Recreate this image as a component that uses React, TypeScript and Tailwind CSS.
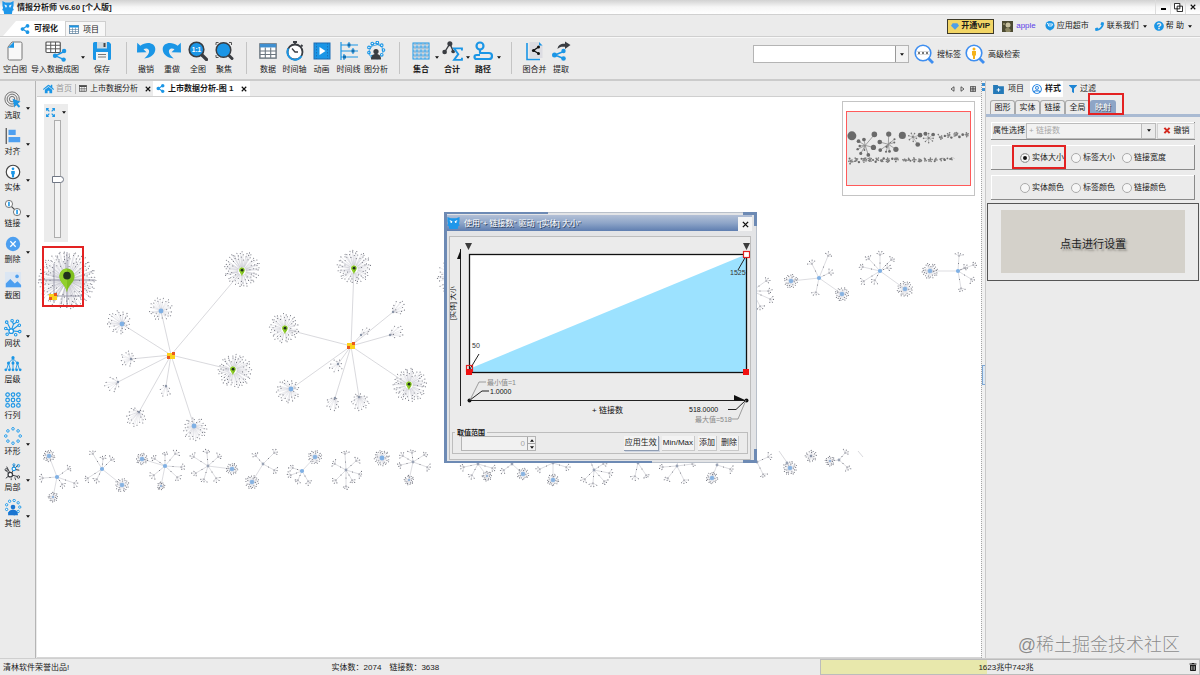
import React from 'react';
import { FaShareAlt, FaHome, FaPhoneAlt, FaFilter, FaQuestionCircle, FaRegUserCircle, FaTrashAlt } from 'react-icons/fa';

const BLUE = '#1b96e6';
const DARK = '#3a3d42';

/* ---------- graph data ---------- */

type Burst = { x: number; y: number; r: number; n: number; cx?: number; cy?: number; hub?: 'pin' | 'blue' | 'dot' };
type Star = { x: number; y: number; big?: boolean; bursts?: [number, number, number][]; fans?: [number, number][] };

const BURSTS: Burst[] = [
  { x: 67, y: 280, r: 29, n: 180 },
  { x: 242, y: 269, r: 18, n: 82, cy: 271, hub: 'pin' },
  { x: 354, y: 267, r: 17, n: 74, cy: 269, hub: 'pin' },
  { x: 460, y: 277, r: 23, n: 90, hub: 'pin' },
  { x: 235, y: 371, r: 17, n: 74, cx: 233, cy: 370, hub: 'pin' },
  { x: 284, y: 328, r: 15, n: 56, cx: 285, cy: 329, hub: 'pin' },
  { x: 410, y: 385, r: 17, n: 74, cx: 409, hub: 'pin' },
  { x: 161, y: 309, r: 12, n: 32, cy: 311, hub: 'blue' },
  { x: 119, y: 322, r: 12, n: 34, cx: 122, cy: 324, hub: 'blue' },
  { x: 128, y: 359, r: 8, n: 16, cx: 131, hub: 'dot' },
  { x: 112, y: 384, r: 8, n: 12, cx: 118, cy: 382, hub: 'dot' },
  { x: 136, y: 417, r: 10, n: 23, cx: 139, cy: 412, hub: 'dot' },
  { x: 165, y: 391, r: 6, n: 9, cx: 166, cy: 386, hub: 'dot' },
  { x: 195, y: 429, r: 12, n: 36, cx: 194, cy: 426, hub: 'blue' },
  { x: 399, y: 307, r: 7, n: 12, cx: 393, cy: 312, hub: 'dot' },
  { x: 397, y: 332, r: 7, n: 11, cx: 390, cy: 335, hub: 'dot' },
  { x: 366, y: 331, r: 4, n: 6, cx: 361, cy: 335, hub: 'dot' },
  { x: 360, y: 402, r: 9, n: 22, cx: 359, cy: 397, hub: 'dot' },
  { x: 333, y: 404, r: 7, n: 13, cx: 335, cy: 398, hub: 'dot' },
  { x: 336, y: 366, r: 7, n: 11, cx: 338, cy: 364, hub: 'dot' },
  { x: 288, y: 391, r: 12, n: 34, cx: 291, cy: 389, hub: 'blue' },
  { x: 382, y: 458, r: 8, n: 34, hub: 'blue' },
  { x: 811, y: 456, r: 6, n: 20, hub: 'dot' },
];

const LINKS: [number, number, number, number][] = [
  [171, 355, 242, 271], [171, 355, 161, 311], [171, 355, 122, 324], [171, 355, 131, 359], [171, 355, 118, 382],
  [171, 355, 139, 412], [171, 355, 166, 386], [171, 355, 194, 426], [171, 355, 233, 370],
  [351, 346, 354, 269], [351, 346, 285, 329], [351, 346, 393, 312], [351, 346, 390, 335], [351, 346, 361, 335],
  [351, 346, 409, 385], [351, 346, 359, 397], [351, 346, 335, 398], [351, 346, 338, 364], [351, 346, 291, 389],
  [779, 451, 786, 461], [786, 461, 790, 468], [858, 451, 863, 457],
];

const STARS: Star[] = [
  { x: 57, y: 477, big: true, bursts: [[49, 456, 6], [53, 497, 5]], fans: [[68, 469], [74, 483], [43, 478], [62, 484]] },
  { x: 102, y: 469, big: true, bursts: [[122, 485, 7]], fans: [[93, 454], [111, 460], [88, 478], [97, 479], [103, 459]] },
  { x: 165, y: 466, big: true, bursts: [[142, 459, 6], [161, 486, 4]], fans: [[175, 454], [181, 467], [177, 477], [154, 475], [165, 455], [155, 459]] },
  { x: 208, y: 466, bursts: [[232, 469, 6]], fans: [[207, 453], [194, 457], [218, 457], [196, 473], [204, 479], [216, 478]] },
  { x: 263, y: 464, bursts: [[252, 482, 7]], fans: [[274, 453], [256, 456], [274, 470]] },
  { x: 302, y: 471, big: true, bursts: [[315, 457, 7]], fans: [[291, 475], [293, 468], [308, 481], [298, 480]] },
  { x: 346, y: 470, fans: [[345, 454], [356, 461], [359, 474], [346, 486], [336, 480], [335, 464], [352, 480]] },
  { x: 413, y: 462, bursts: [[409, 480, 5]], fans: [[403, 456], [412, 453], [424, 455], [427, 467], [401, 465]] },
  { x: 478, y: 464, bursts: [[487, 476, 5]], fans: [[464, 467], [472, 475], [492, 468]] },
  { x: 512, y: 464, bursts: [[523, 474, 6]], fans: [[504, 470], [508, 455]] },
  { x: 553, y: 463, bursts: [[553, 480, 6]], fans: [[540, 469], [566, 467], [550, 452]] },
  { x: 594, y: 470, fans: [[590, 460], [604, 481], [593, 483], [585, 479], [609, 473], [603, 464]] },
  { x: 638, y: 463, fans: [[635, 476], [646, 475], [632, 455]] },
  { x: 677, y: 466, fans: [[663, 467], [668, 478], [684, 480], [692, 464], [679, 454]] },
  { x: 717, y: 465, bursts: [[712, 478, 6]], fans: [[730, 469], [722, 455]] },
  { x: 757, y: 462, fans: [[768, 457], [763, 474]] },
  { x: 787, y: 463, bursts: [[790, 468, 7]] },
  { x: 839, y: 460, bursts: [[830, 461, 5]], fans: [[845, 453], [847, 467]] },
  { x: 542, y: 290, big: true, bursts: [[598, 275, 14], [580, 348, 14]], fans: [[530, 260], [510, 280], [515, 310], [545, 325], [555, 262], [570, 300]] },
  { x: 665, y: 298, big: true, bursts: [[640, 265, 12], [700, 270, 11]], fans: [[625, 300], [640, 325], [665, 335], [695, 320], [665, 262], [700, 300]] },
  { x: 752, y: 291, fans: [[766, 281], [770, 299], [768, 291], [760, 306], [740, 270]] },
  { x: 819, y: 278, big: true, bursts: [[791, 281, 7], [842, 294, 7]], fans: [[812, 264], [828, 256], [829, 273], [816, 292]] },
  { x: 880, y: 271, big: true, bursts: [[905, 289, 8]], fans: [[869, 259], [880, 255], [891, 260], [863, 267], [864, 281], [875, 280], [887, 268]] },
  { x: 958, y: 271, big: true, bursts: [[930, 271, 8]], fans: [[959, 256], [973, 265], [971, 279], [961, 288], [964, 268]] },
];

const rnd = (seed: number) => {
  const v = Math.sin(seed * 12.9898) * 43758.5453;
  return v - Math.floor(v);
};

function burstPaths(b: Burst) {
  const cx = b.cx ?? b.x;
  const cy = b.cy ?? b.y;
  let spokes = '';
  let dots = '';
  for (let i = 0; i < b.n; i++) {
    const a = i * 2.39996 + rnd(b.x + i) * 0.2;
    const d = b.r * (0.4 + 0.6 * Math.sqrt((i + 0.5) / b.n));
    const px = (b.x + Math.cos(a) * d).toFixed(1);
    const py = (b.y + Math.sin(a) * d).toFixed(1);
    spokes += `M${cx} ${cy}L${px} ${py}`;
    dots += `M${px} ${py}h.01`;
  }
  return { lines: '', spokes, dots };
}

function fanPaths(hx: number, hy: number, fx: number, fy: number) {
  const a = Math.atan2(fy - hy, fx - hx);
  let lines = `M${hx} ${hy}L${fx} ${fy}`;
  let dots = `M${fx} ${fy}h.01M${(hx + fx) / 2} ${(hy + fy) / 2}h.01`;
  [-1.1, -0.3, 0.5, 1.2].forEach((o, i) => {
    const d = 2.5 + rnd(fx + fy + i) * 2;
    const px = (fx + Math.cos(a + o) * d).toFixed(1);
    const py = (fy + Math.sin(a + o) * d).toFixed(1);
    lines += `M${fx} ${fy}L${px} ${py}`;
    dots += `M${px} ${py}h.01`;
  });
  return { lines, spokes: '', dots };
}

function buildGraph() {
  let lines = '';
  let spokes = '';
  let dots = '';
  const add = (p: { lines: string; spokes: string; dots: string }) => {
    lines += p.lines;
    spokes += p.spokes;
    dots += p.dots;
  };
  BURSTS.forEach((b) => add(burstPaths(b)));
  STARS.forEach((s) => {
    s.bursts?.forEach(([x, y, r]) => {
      lines += `M${s.x} ${s.y}L${x} ${y}`;
      add(burstPaths({ x, y, r, n: Math.round(r * 4) }));
    });
    s.fans?.forEach(([x, y]) => add(fanPaths(s.x, s.y, x, y)));
  });
  return { lines, spokes, dots };
}

const GRAPH = buildGraph();
const LINK_PATH = LINKS.map(([a, b, c, d]) => `M${a} ${b}L${c} ${d}`).join('');

function Pin({ x, y, s }: { x: number; y: number; s: number }) {
  return (
    <g transform={`translate(${x} ${y}) scale(${s})`}>
      <path d="M0 15C-1 8-8 5-8-2a8 8 0 0 1 16 0C8 5 1 8 0 15Z" fill="#7fbf1f" />
      <path d="M0 15C-1 8-8 5-8-2a8 8 0 0 1 8-8Z" fill="#92d02c" />
      <circle cx="0" cy="-2.5" r="4" fill="#20301c" />
    </g>
  );
}

function Building({ x, y }: { x: number; y: number }) {
  return (
    <g>
      <path d={`M${x - 4} ${y - 3}h8v6h-8z`} fill="#fbd21c" />
      <path d={`M${x + 1} ${y - 4}h3v3h-3zM${x - 4} ${y}h3v3h-3z`} fill="#ea5a1c" />
    </g>
  );
}

function Graph() {
  return (
    <g>
      <path d={LINK_PATH} stroke="#c8c8ce" strokeWidth=".7" />
      <path d={GRAPH.spokes} stroke="#a9a9b8" strokeWidth=".2" />
      <path d={GRAPH.lines} stroke="#a9a9b4" strokeWidth=".4" />
      <path d={GRAPH.dots} stroke="#5a5d68" strokeWidth="1.1" strokeLinecap="round" opacity=".85" />
      <path d="M38 280H95M67 252V308M54 296H82M54 264V296" stroke="#8a8a9c" strokeWidth=".8" />
      {BURSTS.map((b, i) => {
        const cx = b.cx ?? b.x;
        const cy = b.cy ?? b.y;
        if (b.hub === 'pin')
          return (
            <g key={i}>
              <circle cx={cx} cy={cy} r="3.8" fill="#fff" />
              <Pin x={cx} y={cy} s={0.34} />
            </g>
          );
        if (b.hub === 'blue') return <circle key={i} cx={cx} cy={cy} r="2.4" fill="#7fb0e4" />;
        return b.hub ? <circle key={i} cx={cx} cy={cy} r="1.2" fill="#8a94a6" /> : null;
      })}
      {STARS.map((s, i) => (
        <g key={i}>
          <circle cx={s.x} cy={s.y} r={s.big ? 2.1 : 1.4} fill={s.big ? '#7fb0e4' : '#9aa3b5'} />
          {s.bursts?.map(([x, y, r]) => (
            <circle key={x} cx={x} cy={y} r={r > 5 ? 2.3 : 1} fill="#7fb0e4" opacity=".85" />
          ))}
        </g>
      ))}
      <Building x={171} y={356} />
      <Building x={351} y={346} />
      <Pin x={67} y={278} s={0.95} />
      <Building x={53} y={297} />
    </g>
  );
}

function MiniMap() {
  return (
    <div className="absolute right-[6px] top-1 border border-[#c4c4c4] bg-white px-[3px] pb-[9px] pt-[9px]">
      <svg viewBox="29 99 958 560" className="block h-[75px] w-[125px] border border-[#ff5a5a] bg-[#e9e9e9]" fill="none">
        <path d={LINK_PATH} stroke="#8a8a8a" strokeWidth="6" />
        {BURSTS.map((b, i) => (
          <circle key={i} cx={b.x} cy={b.y} r={b.r * 1.2} fill="#6a6a6a" />
        ))}
        {STARS.map((s, i) => (
          <g key={i}>
            <circle cx={s.x} cy={s.y} r="8" fill="#6a6a6a" />
            {s.bursts?.map(([x, y, r]) => (
              <g key={x}>
                <line x1={s.x} y1={s.y} x2={x} y2={y} stroke="#8a8a8a" strokeWidth="4" />
                <circle cx={x} cy={y} r={r * 1.3} fill="#6a6a6a" />
              </g>
            ))}
            {s.fans?.map(([x, y]) => (
              <g key={`${x}-${y}`}>
                <line x1={s.x} y1={s.y} x2={x} y2={y} stroke="#8a8a8a" strokeWidth="4" />
                <circle cx={x} cy={y} r="6" fill="#777" />
              </g>
            ))}
          </g>
        ))}
      </svg>
    </div>
  );
}

/* ---------- shared bits ---------- */

const Caret = ({ className = '' }: { className?: string }) => (
  <svg viewBox="0 0 6 4" className={`h-[3px] w-[4px] shrink-0 ${className}`}>
    <path d="M0 0h6L3 4z" fill="#111" />
  </svg>
);

const Svg = ({ children, className = 'h-5 w-5' }: { children: React.ReactNode; className?: string }) => (
  <svg viewBox="0 0 20 20" className={`shrink-0 ${className}`} fill="none">
    {children}
  </svg>
);

const Mascot = ({ className }: { className: string }) => (
  <svg viewBox="0 0 14 14" className={`shrink-0 ${className}`} preserveAspectRatio="none">
    <path d="M.5 0L4 1.500h6L13.500 0v5l-.7 2.500 1 2.300-1.600.8L11.500 14h-9l-.7-3.400L.2 9.800l1-2.300L.5 5z" fill="#1e97ea" />
    <path d="M3 4.200l2.600 1.300M11 4.200L8.400 5.500" stroke="#fff" strokeWidth="1.100" />
    <circle cx="4.600" cy="6" r=".9" fill="#fff" />
    <circle cx="9.400" cy="6" r=".9" fill="#fff" />
  </svg>
);

const TableIcon = ({ className = 'h-[9px] w-[10px]', head = BLUE, stroke = '#5c7f9c' }: { className?: string; head?: string; stroke?: string }) => (
  <svg viewBox="0 0 20 18" className={`shrink-0 ${className}`} preserveAspectRatio="none">
    <rect x="1" y="1" width="18" height="16" fill="#fff" stroke={stroke} strokeWidth="1.600" />
    <rect x="1" y="1" width="18" height="4" fill={head} />
    <path d="M1 9h18M1 13h18M7 5v12M13 5v12" stroke={stroke} strokeWidth="1.200" />
  </svg>
);

/* ---------- toolbar icons ---------- */

const ring = (cx: number, cy: number, r: number, n: number, s = 1.3, color = BLUE) =>
  Array.from({ length: n }, (_, i) => {
    const a = (i / n) * Math.PI * 2;
    return <circle key={i} cx={cx + Math.cos(a) * r} cy={cy + Math.sin(a) * r} r={s} stroke={color} strokeWidth="1.100" fill="#fff" />;
  });

const iconBlank = (
  <Svg>
    <path d="M7 1h8.500a1.500 1.500 0 0 1 1.500 1.500v15a1.500 1.500 0 0 1-1.500 1.500h-11A1.500 1.500 0 0 1 3 17.500V6z" fill="#f8f8f8" stroke="#777" />
    <path d="M9 .8v6H3z" fill={BLUE} />
  </Svg>
);
const iconImport = (
  <svg viewBox="0 0 24 22" className="h-[21px] w-[23px]" fill="none">
    <rect x="2" y="1" width="15" height="11" rx="1" fill="#fff" stroke="#555" strokeWidth="1.200" />
    <path d="M2 4.500h15M2 8.200h15M7 1v11M12 1v11" stroke="#555" />
    <path d="M21 11l-9 4.500 9 4" stroke={BLUE} strokeWidth="1.500" />
    <circle cx="21" cy="10.500" r="2.300" fill={BLUE} />
    <circle cx="11.500" cy="15.500" r="2.300" fill={BLUE} />
    <circle cx="20.500" cy="19.500" r="2.300" fill={BLUE} />
  </svg>
);
const iconSave = (
  <Svg>
    <path d="M1 2.500A1.500 1.500 0 0 1 2.500 1H17l2 2v14.500a1.500 1.500 0 0 1-1.500 1.500h-15A1.500 1.500 0 0 1 1 17.500z" fill={BLUE} />
    <path d="M5 1h10v6.500H5z" fill="#cfd8de" />
    <path d="M11.500 2h2v4h-2z" fill="#444" />
    <path d="M4 11h12v8H4z" fill="#f4f4f4" />
    <path d="M6 13.500h8M6 16h8" stroke="#777" />
  </Svg>
);
const undoPath = 'M1.200 1.800L1 11.500l9.500-.2-3-3c2-1.400 4.700-1 5.400 1 .8 2.400-.8 5.200-4.600 8.200 7-.8 11-4.500 11-9.500 0-6-8.500-8.200-15-3.200z';
const iconUndo = <Svg><path d={undoPath} fill={BLUE} /></Svg>;
const iconRedo = <Svg><g transform="matrix(-1 0 0 1 20 0)"><path d={undoPath} fill={BLUE} /></g></Svg>;
const iconFull = (
  <Svg>
    <path d="M14 14l4.500 4.500" stroke={DARK} strokeWidth="3.200" strokeLinecap="round" />
    <circle cx="8.500" cy="8.500" r="7.300" fill={BLUE} stroke={DARK} strokeWidth="1.600" />
    <text x="8.500" y="10.800" fontSize="6.500" fontWeight="700" fill="#fff" textAnchor="middle">1:1</text>
  </Svg>
);
const iconFocus = (
  <Svg>
    <path d="M2 4V1.500h2.500M15 1.500h2.500V4M2 14v2.500h2.500" stroke="#555" />
    <path d="M14.500 14l3.500 3.500" stroke={DARK} strokeWidth="3" strokeLinecap="round" />
    <circle cx="9.500" cy="9" r="7.300" fill={BLUE} stroke={DARK} strokeWidth="1.500" />
  </Svg>
);
const iconTimer = (
  <Svg>
    <path d="M8 1h4M10 1v2M16 4l1.500 1.500" stroke={DARK} strokeWidth="1.800" />
    <circle cx="10" cy="11" r="7.500" fill="#fff" stroke={DARK} strokeWidth="1.800" />
    <path d="M3.500 7.500a7.500 7.500 0 0 0 13 7.500" stroke={BLUE} strokeWidth="2" />
    <path d="M7 7.500l3 3.500h3" stroke={DARK} strokeWidth="1.300" />
  </Svg>
);
const iconPlay = (
  <Svg>
    <rect x="2" y="2" width="16" height="16" fill={BLUE} stroke="#1f6fb5" />
    <path d="M4.500 2v16M15.500 2v16" stroke="#1f6fb5" strokeDasharray="1.500 1.500" />
    <path d="M7.500 6v8l6-4z" fill="#fff" />
  </Svg>
);
const iconTimeline = (
  <Svg>
    <path d="M2 1v18M2 4h17M2 10h17M2 16h17M10 1v6M14 7v6M5 13v6" stroke={BLUE} strokeWidth="1.200" />
    <path d="M8.500 4h3M12.500 10h3M4 16h3" stroke="#146fb0" strokeWidth="3" />
  </Svg>
);
const iconAnalyze = (
  <Svg>
    {ring(10, 9, 7.500, 9, 1.300)}
    <path d="M4 6l5-4 7 4 1 6M3 10l3-5 8-2M3 10l1 5" stroke={BLUE} strokeWidth=".8" />
    <circle cx="10" cy="10.500" r="2.600" fill={DARK} />
    <path d="M5 18.500c0-4 2-5.500 5-5.500s5 1.500 5 5.500z" fill={DARK} />
  </Svg>
);
const iconSet = (
  <Svg>
    <rect x="2" y="2" width="16" height="16" stroke={BLUE} />
    <path d="M6 2v16M10 2v16M14 2v16M2 6h16M2 10h16M2 14h16" stroke={BLUE} strokeWidth=".8" />
    <path d="M4 2.500v15M8 2.500v15M12 2.500v15M16 2.500v15" stroke="#5a7fa0" strokeDasharray="2 2" strokeWidth=".8" />
  </Svg>
);
const iconSum = (
  <Svg className="h-[21px] w-[21px]">
    <path d="M2.500 10.500l5-8 4 9" stroke={DARK} strokeWidth="1.300" />
    <circle cx="2.500" cy="10.500" r="2.200" fill={DARK} />
    <circle cx="7.500" cy="2.700" r="2.400" fill={DARK} />
    <circle cx="10.500" cy="10" r="1.700" fill={DARK} />
    <path d="M19 9V7h-7.500l4 5.500-4 5.500H19v-2" stroke={BLUE} strokeWidth="1.800" />
  </Svg>
);
const iconPath = (
  <Svg>
    <circle cx="7" cy="5" r="3.500" stroke={BLUE} strokeWidth="2.200" />
    <path d="M7 8.500V12h9a3 3 0 0 1 0 6H3.500a2 2 0 0 1 0-4H7" stroke={BLUE} strokeWidth="2.200" strokeLinejoin="round" />
  </Svg>
);
const iconMerge = (
  <Svg>
    <path d="M4.500 1H14l3.500 3.500V17h-13z" fill="#dcdce2" />
    <path d="M14 1v3.500h3.500z" fill={BLUE} />
    <path d="M2 2v16.500h13" stroke={BLUE} strokeWidth="1.600" />
    <path d="M13.500 6L8.500 9.500l5 3" stroke="#111" strokeWidth="1.200" />
    <circle cx="13.500" cy="6" r="1.500" fill="#111" />
    <circle cx="8.500" cy="9.500" r="1.600" fill="#111" />
    <circle cx="13.500" cy="12.500" r="1.500" fill="#111" />
  </Svg>
);
const iconExtract = (
  <Svg>
    <path d="M6.500 8C7 4 10 2.500 14 2.800V.5L19.500 4 14 8V5.800c-3.500-.3-5.500.2-7.500 2.200z" fill={DARK} />
    <path d="M12.500 10.500L4 14l8.500 3.500" stroke={BLUE} strokeWidth="1.600" />
    <circle cx="12.500" cy="10" r="2.200" fill={BLUE} />
    <circle cx="3.500" cy="14" r="2.500" fill={BLUE} />
    <circle cx="12.500" cy="17.500" r="2.300" fill={BLUE} />
  </Svg>
);

function Tool({ icon, label, w = 'w-[26px]', bold = false, menu = false }: { icon: React.ReactNode; label: string; w?: string; bold?: boolean; menu?: boolean }) {
  return (
    <>
      <button className={`flex shrink-0 flex-col items-center gap-[3px] ${w}`}>
        <span className="flex h-[22px] items-center">{icon}</span>
        <span className={`whitespace-nowrap leading-[10px] ${bold ? 'font-bold' : ''}`}>{label}</span>
      </button>
      {menu && <span className="flex w-[5px] shrink-0 justify-center self-center"><Caret /></span>}
    </>
  );
}

const Divider = ({ w = 'w-[18px]' }: { w?: string }) => (
  <span className={`flex shrink-0 justify-center ${w}`}>
    <span className="h-8 w-px bg-[#c4c4c4]" />
  </span>
);

/* ---------- side tools ---------- */

const B = '#4d9ff0';
const sideTop: [string, React.ReactNode, boolean][] = [
  ['选取', <Svg className="h-[18px] w-[18px]"><circle cx="9" cy="9" r="8" stroke="#666" /><circle cx="9" cy="9" r="5.500" stroke="#666" /><circle cx="9" cy="9" r="3" stroke="#666" /><path d="M9.500 8.500l9 3.500-3.500 1.500 3 3.500-1.500 1.500-3.300-3.300-1.500 3.300z" fill={BLUE} /></Svg>, true],
  ['对齐', <Svg className="h-[18px] w-[18px]"><path d="M2.500 1v18" stroke="#555" strokeWidth="1.400" /><path d="M5 3h8v6H5zM5 11h13v6H5z" fill={B} /></Svg>, true],
  ['实体', <Svg className="h-[18px] w-[18px]"><circle cx="10" cy="10" r="7.500" fill="#fff" stroke="#444" strokeWidth="1.300" /><circle cx="10" cy="6.500" r="1.500" fill={BLUE} /><path d="M8 9h4v3.500h-.8V16H8.800v-3.500H8z" fill={BLUE} /></Svg>, true],
  ['链接', <Svg className="h-[18px] w-[18px]"><path d="M7 7l6 6" stroke="#444" strokeWidth="1.200" /><circle cx="5.500" cy="5.500" r="4" fill="#fff" stroke="#666" /><circle cx="14.500" cy="14.500" r="4" fill="#fff" stroke="#666" /><path d="M5.500 3v5M14.500 12v5" stroke={BLUE} strokeWidth="1.800" /></Svg>, true],
  ['删除', <Svg className="h-[18px] w-[18px]"><circle cx="10" cy="10" r="8" fill={B} /><path d="M7 7l6 6M13 7l-6 6" stroke="#fff" strokeWidth="1.400" /></Svg>, true],
  ['截图', <Svg className="h-[18px] w-[18px]"><rect x="1" y="1" width="18" height="18" fill="#dbe6f3" /><path d="M2 18v-4l5-5 5 5 3-2.500 4 4V18z" fill={B} /><circle cx="14.500" cy="6" r="2" fill={B} /></Svg>, false],
];
const sideBottom: [string, React.ReactNode, boolean][] = [
  ['网状', <Svg className="h-[18px] w-[18px]"><path d="M8 13L3.500 4M8 13l2.500-7M10.500 6L9 2M10.500 6l4-3M8 13l8-6M8 13L2 11M8 13l9 1" stroke={BLUE} strokeWidth="1.200" /><circle cx="8" cy="13.500" r="2.500" fill="#fff" stroke={BLUE} strokeWidth="1.400" />{[[3, 3.500], [9, 2], [15, 2.500], [17, 7], [2, 10.500], [17.500, 14], [13, 17.500], [3.500, 17]].map(([x, y]) => <circle key={`${x}-${y}`} cx={x} cy={y} r="1.400" stroke={BLUE} strokeWidth="1.200" fill="#fff" />)}</Svg>, true],
  ['层级', <Svg className="h-[18px] w-[18px]"><path d="M10 3v5M10 4L5 9M10 4l5 5M5 9l-2 7M5 9l2 7M15 9l-2 7M15 9l2 7M10 9v7" stroke={BLUE} /><circle cx="10" cy="3" r="1.800" fill={BLUE} />{[5, 10, 15].map((x) => <circle key={x} cx={x} cy="9" r="1.700" fill={BLUE} />)}{[2, 6, 10, 14, 18].map((x) => <circle key={x} cx={x} cy="16.500" r="1.500" fill={BLUE} />)}</Svg>, false],
  ['行列', <Svg className="h-[18px] w-[18px]">{[4, 10, 16].map((x) => [4, 10, 16].map((y) => <circle key={`${x}${y}`} cx={x} cy={y} r="2" stroke={BLUE} strokeWidth="1.300" />))}</Svg>, false],
  ['环形', <Svg className="h-[18px] w-[18px]">{ring(10, 10, 8, 8, 1.400)}</Svg>, true],
  ['局部', <Svg className="h-[18px] w-[18px]"><path d="M7 13L2 8M7 13l-5 4M7 13l8 2M11 7l5-5M11 7V2M11 7l6 1M8 12l3-5M3 4l4 8" stroke={DARK} strokeWidth="1.100" /><circle cx="7" cy="13" r="2.500" fill="#fff" stroke={DARK} strokeWidth="1.400" /><circle cx="2.500" cy="7.500" r="1.300" stroke={DARK} /><circle cx="16" cy="15.500" r="1.400" stroke={DARK} /><circle cx="11" cy="6.500" r="2" fill="#fff" stroke={BLUE} strokeWidth="1.300" /><circle cx="16" cy="3" r="1.400" stroke={BLUE} /><circle cx="11" cy="2" r="1.200" stroke={BLUE} /><path d="M8 17v2M12 16l1 3" stroke={DARK} /></Svg>, true],
  ['其他', <Svg className="h-[18px] w-[18px]">{ring(10, 9, 7.500, 9, 1.300)}<circle cx="10" cy="9" r="2.600" fill="#1a75d1" /><path d="M4.500 18c0-4 2-6 5.500-6s5.500 2 5.500 6z" fill="#1a75d1" /></Svg>, true],
];

function SideItem({ label, icon, menu }: { label: string; icon: React.ReactNode; menu: boolean }) {
  return (
    <button className="flex h-9 items-start">
      <span className="flex w-[25px] flex-col items-center">
        {icon}
        <span className="leading-[13px]">{label}</span>
      </span>
      {menu && <Caret className="mt-4 ml-px" />}
    </button>
  );
}

/* ---------- dialog ---------- */

function MappingDialog() {
  return (
    <section className="absolute left-[407px] top-[115px] w-[313px] bg-[#e3e4e6] p-[3px] outline outline-1 -outline-offset-1 outline-[#b9c0ca]" aria-label="映射设置">
      <span className="absolute left-0 top-0 h-full w-[3px] bg-[#6d8ab4]" />
      <span className="absolute left-0 top-0 h-[2px] w-[104px] bg-[#6d8ab4]" />
      <span className="absolute bottom-0 left-0 h-[2px] w-[208px] bg-[#6d8ab4]" />
      <span className="absolute right-0 top-0 h-[14px] w-[14px] border-r-[3px] border-t-[3px] border-[#6d8ab4]" />
      <span className="absolute bottom-0 right-0 h-[14px] w-[14px] border-b-[3px] border-r-[3px] border-[#6d8ab4]" />
      <header className="relative mr-[2px] flex h-[16px] items-center gap-[4px] bg-linear-to-b from-[#b3c0d6] via-[#8ea5c8] to-[#5f7eb0]">
        <Mascot className="h-[12px] w-[13px]" />
        <h2 className="flex-1 pt-px text-[8px] text-white [text-shadow:1px_1px_0_#2c3c58]">使用“+ 链接数” 驱动 “[实体] 大小”</h2>
        <button aria-label="关闭" className="mt-[2px] flex h-[14px] w-[14px] items-center justify-center bg-[#f5f5f5]">
          <svg viewBox="0 0 8 8" className="h-[7px] w-[7px]"><path d="M1 1l6 6M7 1L1 7" stroke="#111" strokeWidth="1.600" /></svg>
        </button>
      </header>
      <div className="relative ml-[2px] mr-[3px] mt-[5px] border border-[#bdbdbd] bg-[#ebebeb] pb-[5px]">
        <svg viewBox="450 237 300 192" className="block h-[192px] w-full font-[inherit]" fontSize="7">
          <rect x="469" y="254" width="278" height="118" fill="#fff" />
          <path d="M469 369L747 254V372H469z" fill="#9ce2ff" />
          <rect x="469.500" y="254.500" width="277" height="118" fill="none" stroke="#111" strokeWidth="1.300" />
          <path d="M465 243h7l-3.500 7zM743 243h7l-3.500 7z" fill="#3c3c3c" />
          <path d="M460.500 249v157" stroke="#222" />
          <path d="M461 249v10h-4z" fill="#111" />
          <path d="M469 400.500h278" stroke="#222" />
          <path d="M734 395l12 5.500h-12z" fill="#111" />
          <circle cx="469.500" cy="400.500" r="2" fill="#111" />
          <circle cx="746.500" cy="400.500" r="2" fill="#111" />
          <path d="M470 369l9-15M746 256l-8 14M470 400l12-9h7M746 400l-10 9.500h-8" stroke="#222" fill="none" />
          <path d="M470 400l9-18h7M746 400l-8 19h-7" stroke="#888" fill="none" strokeWidth=".8" />
          <rect x="466.500" y="365.500" width="6" height="6" fill="none" stroke="#e02020" strokeWidth="1.200" />
          <rect x="743.500" y="251.500" width="6" height="6" fill="#fff" stroke="#e02020" strokeWidth="1.200" />
          <rect x="466" y="369" width="6" height="6" fill="#f01010" />
          <rect x="743" y="369" width="6" height="6" fill="#f01010" />
          <text x="472" y="348" fill="#333">50</text>
          <text x="730" y="275" fill="#333">1525</text>
          <text x="487" y="385" fill="#888">最小值=1</text>
          <text x="490" y="394" fill="#111">1.0000</text>
          <text x="592" y="413" fontSize="8" fill="#111">+ 链接数</text>
          <text x="689" y="412" fill="#111">518.0000</text>
          <text x="695" y="422" fill="#888">最大值=518</text>
          <text transform="translate(455 320) rotate(-90)" fill="#111">[实体] 大小</text>
        </svg>
        <fieldset className="mx-[2px] flex items-center border border-[#bdbdbd] px-[8px] pb-[2px]">
          <legend className="ml-[-6px] px-[2px] text-[7px] font-bold leading-[7px]">取值范围</legend>
          <div className="flex h-[15px] w-[75px] border border-[#b5b5b5] bg-[#f1f1f1]">
            <input aria-label="取值范围" defaultValue="0" className="w-0 flex-1 pr-[2px] text-right text-[8px] text-[#a5a5a5] outline-none" />
            <div className="flex w-[8px] flex-col border-l border-[#a5a5a5]">
              <button aria-label="增加" className="flex flex-1 items-center justify-center border-b border-[#a5a5a5]"><Caret className="rotate-180" /></button>
              <button aria-label="减少" className="flex flex-1 items-center justify-center"><Caret /></button>
            </div>
          </div>
          <div className="ml-auto flex gap-[3px]">
            {['应用生效', 'Min/Max', '添加', '删除'].map((t, i) => (
              <button key={t} className={`h-[15px] whitespace-nowrap border-b border-r bg-[#f3f3f3] px-px text-[8px] ${i === 0 ? 'border-[#8f9db3] shadow-[1px_1px_0_#cfd6e2]' : 'border-[#c9c9c9]'}`}>{t}</button>
            ))}
          </div>
        </fieldset>
      </div>
    </section>
  );
}

/* ---------- right panel ---------- */

function RadioRow({ items, checked }: { items: string[]; checked?: number }) {
  return (
    <div className="relative flex h-[25px] items-center gap-[7px] border-b border-r border-[#8a8a8a] bg-[#ebebeb] pl-[29px] pt-px shadow-[inset_1px_1px_0_#fff]">
      {items.map((t, i) => (
        <label key={t} className="flex items-center gap-[2px] whitespace-nowrap">
          <input
            type="radio"
            name="mapping"
            defaultChecked={checked === i}
            className="m-0 h-[10px] w-[10px] appearance-none rounded-full border border-[#aaa] bg-[#f6f6f6] checked:bg-[#111] checked:shadow-[inset_0_0_0_2px_#f6f6f6]"
          />
          {t}
        </label>
      ))}
      {checked !== undefined && <span className="pointer-events-none absolute left-[21px] top-0 h-6 w-[54px] border-2 border-[#e32222]" />}
    </div>
  );
}

function RightPanel() {
  return (
    <aside className="relative flex w-[215px] shrink-0 flex-col border-l border-[#c9c9c9] bg-[#ebebeb]">
      <nav className="flex h-[16px] items-stretch pl-[4px]">
        <button className="flex w-10 items-center gap-[4px] pl-[3px]">
          <svg viewBox="0 0 12 10" className="h-[9px] w-[11px]"><path d="M0 0h5l1 1.500h6V10H0z" fill="#2479b8" /><path d="M6 3.500v4M4 5.500h4" stroke="#fff" /></svg>
          项目
        </button>
        <button className="flex items-center gap-[3px] bg-white px-[2px] font-bold">
          <FaRegUserCircle className="h-[10px] w-[10px] text-[#1c7fe0]" />
          样式
        </button>
        <button className="flex items-center gap-[3px] px-[6px]">
          <FaFilter className="h-[8px] w-[8px] text-[#1f85d4]" />
          过滤
        </button>
      </nav>
      <nav className="relative mt-[3px] flex h-[17px] border-b-[3px] border-[#a9bad2] pl-[4px]">
        {['图形', '实体', '链接', '全局'].map((t) => (
          <button key={t} className="w-[25px] rounded-t-[3px] border border-b-0 border-[#aaa] bg-[#ebebeb] pt-px">{t}</button>
        ))}
        <button className="w-[26px] rounded-t-[3px] bg-[#8ea5c6] pt-px text-white [text-shadow:1px_1px_0_#4a4f5c]">映射</button>
        <span className="pointer-events-none absolute left-[102px] top-[-7px] h-[22px] w-9 border-2 border-[#e32222]" />
      </nav>
      <div className="mt-[5px] flex flex-col gap-[5px] pl-[5px] pr-[5px]">
        <div className="flex h-[18px] items-center border-b border-r border-[#8a8a8a] shadow-[inset_1px_1px_0_#fff]">
          <label htmlFor="attr" className="w-[35px] whitespace-nowrap pl-[2px]">属性选择</label>
          <div className="relative flex h-[16px] flex-1 items-center border border-[#bbb] bg-[#f2f2f2]">
            <select id="attr" className="h-full w-full appearance-none pl-[2px] text-[8px] text-[#a8a8a8] outline-none">
              <option>+ 链接数</option>
            </select>
            <span className="pointer-events-none absolute right-0 top-0 flex h-full w-[14px] items-center justify-center border-l border-[#bbb] bg-[#ebebeb]"><Caret /></span>
          </div>
          <button className="ml-[2px] flex h-[14px] w-[36px] items-center justify-center gap-[3px] bg-[#f1f1f1] shadow-[0_0_0_1px_#d2d2d2]">
            <svg viewBox="0 0 8 8" className="h-[7px] w-[8px]"><path d="M1 1l6 6M7 1L1 7" stroke="#d42a20" strokeWidth="2.400" /></svg>
            撤销
          </button>
        </div>
        <RadioRow items={['实体大小', '标签大小', '链接宽度']} checked={0} />
        <RadioRow items={['实体颜色', '标签颜色', '链接颜色']} />
      </div>
      <div className="ml-px mr-px mt-[3px] border border-[#555] px-[13px] pb-[7px] pt-[6px]">
        <button className="h-[63px] w-full bg-[#d4d1ca] pt-[4px] text-[11px] text-[#222] [text-shadow:2px_2px_2px_#8a8780]">点击进行设置</button>
      </div>
      <p className="mt-auto pb-[2px] pr-5 text-right text-[18px] font-light leading-[22px] text-[#8b8b8b] [text-shadow:0_0_1px_#fff]">@稀土掘金技术社区</p>
    </aside>
  );
}

/* ---------- page ---------- */

const Close = () => (
  <svg viewBox="0 0 8 8" className="h-[6px] w-[6px] shrink-0"><path d="M1 1l6 6M7 1L1 7" stroke="#111" strokeWidth="1.500" /></svg>
);

export default function App() {
  return (
    <div className="flex h-screen flex-col overflow-hidden bg-[#ebebeb] text-[8px] leading-[10px] text-[#1a1a1a] [font-family:'Liberation_Sans','Noto_Sans_CJK_SC',sans-serif]">
      <header className="flex h-[15px] shrink-0 items-center border-b border-[#d0d0d0] bg-linear-to-b from-[#d2d2d2] via-[#f6f6f6] to-white pl-[2px]">
        <Mascot className="h-[13px] w-[12px]" />
        <h1 className="ml-[3px] pt-px font-bold">情报分析师 V6.60 [个人版]</h1>
        <div className="ml-auto flex h-full items-center">
          <button aria-label="最小化" className="flex h-full w-[15px] items-end justify-center border-l border-[#ddd] pb-[4px]"><span className="h-[2px] w-[5px] bg-black" /></button>
          <button aria-label="还原" className="flex h-full w-[15px] items-center justify-center border-l border-[#ddd]">
            <svg viewBox="0 0 10 10" className="h-[9px] w-[9px]" fill="#fff" stroke="#111"><path d="M.5.5h6v6h-6zM3.500 3.500h6v6h-6z" /></svg>
          </button>
          <button aria-label="关闭" className="flex h-full w-[15px] items-center justify-center border-l border-[#ddd]"><Close /></button>
        </div>
      </header>

      <div className="flex h-[22px] shrink-0 items-center border-b border-[#cfcfcf]">
        <nav className="flex h-[15px] self-end">
          <button className="relative flex w-[65px] items-center gap-[4px] bg-white pl-5 pt-px font-bold [clip-path:polygon(16px_0,100%_0,100%_100%,3px_100%)]">
            <FaShareAlt className="h-[10px] w-[10px] text-[#1b96e6]" />可视化
          </button>
          <button className="flex w-[41px] items-center gap-[4px] border border-b-0 border-[#cfcfcf] bg-[#f7f7f7] pl-[3px] pt-px">
            <TableIcon />项目
          </button>
        </nav>
        <div className="ml-auto flex items-center pr-[8px] pt-px">
          <button className="flex h-[15px] w-[47px] items-center justify-center gap-[2px] border border-[#3d3928] bg-[#f2d565] font-bold">
            <svg viewBox="0 0 10 8" className="h-[7px] w-[8px]"><path d="M2 0h6l2 3-5 5-5-5z" fill="#4f9fe8" /></svg>
            <span className="whitespace-nowrap">开通VIP</span>
          </button>
          <svg viewBox="0 0 11 11" className="ml-[8px] h-[11px] w-[11px]"><path d="M0 0h11v11H0z" fill="#4c4a32" /><circle cx="6" cy="4" r="2.500" fill="#c9c2a0" /><path d="M3 8l3-2 3 3-1 2H4zM1 2h2v2H1z" fill="#8b8662" /></svg>
          <a href="#apple" className="ml-[3px] text-[#5a3fe8]">apple</a>
          <button className="ml-[9px] flex items-center gap-[2px] whitespace-nowrap">
            <svg viewBox="0 0 10 10" className="h-[10px] w-[10px]"><circle cx="5" cy="4.500" r="4.500" fill={BLUE} /><path d="M2 2.500h1l.6 2.500h3.200l.7-2H3.500" stroke="#fff" strokeWidth=".9" fill="none" /><path d="M4 8.500h2L5 10z" fill={BLUE} /></svg>
            应用超市
          </button>
          <button className="ml-[6px] flex items-center gap-[3px] whitespace-nowrap">
            <FaPhoneAlt className="h-[9px] w-[9px] -scale-x-100 text-[#1b96e6]" />联系我们<Caret className="ml-px" />
          </button>
          <button className="ml-[7px] flex items-center gap-[2px] whitespace-nowrap">
            <FaQuestionCircle className="h-[10px] w-[10px] text-[#1b96e6]" />帮 助<Caret className="ml-[2px]" />
          </button>
        </div>
      </div>

      <div className="flex h-[44px] shrink-0 items-center border-b-2 border-[#cbcbcb] pb-px shadow-[inset_0_1px_0_#f8f8f8]">
        <Tool icon={iconBlank} label="空白图" w="w-[30px]" />
        <Tool icon={iconImport} label="导入数据成图" w="w-[50px]" menu />
        <Tool icon={iconSave} label="保存" w="w-[34px]" />
        <Divider w="w-[14px]" />
        <Tool icon={iconUndo} label="撤销" />
        <Tool icon={iconRedo} label="重做" />
        <Tool icon={iconFull} label="全图" />
        <Tool icon={iconFocus} label="聚焦" />
        <Divider />
        <Tool icon={<TableIcon className="h-4 w-[18px]" stroke="#6d7780" head="#3f8fd0" />} label="数据" />
        <Tool icon={iconTimer} label="时间轴" w="w-[27px]" />
        <Tool icon={iconPlay} label="动画" w="w-[27px]" />
        <Tool icon={iconTimeline} label="时间线" w="w-[27px]" />
        <Tool icon={iconAnalyze} label="图分析" w="w-[28px]" />
        <Divider />
        <Tool icon={iconSet} label="集合" bold menu />
        <Tool icon={iconSum} label="合计" bold menu />
        <Tool icon={iconPath} label="路径" bold menu />
        <Divider w="w-[20px]" />
        <Tool icon={iconMerge} label="图合并" w="w-[27px]" />
        <Tool icon={iconExtract} label="提取" />
        <div className="ml-auto mr-[180px] flex items-center self-start pt-[7px]">
          <div className="flex h-[18px] w-[156px] border border-[#b4b4b4] bg-white">
            <input aria-label="搜索" className="w-0 flex-1 px-1 outline-none" />
            <button aria-label="展开" className="flex w-[13px] items-center justify-center border-l border-[#999] bg-[#f3f3f3]"><Caret /></button>
          </div>
          <button className="ml-[5px] flex items-center gap-[3px] whitespace-nowrap">
            <Svg><path d="M14 14l5 5" stroke="#3e8ef0" strokeWidth="2.800" /><circle cx="9" cy="9" r="7.800" fill="#fff" stroke="#3e8ef0" strokeWidth="1.600" /><path d="M4 7.500l2 3m0-3l-2 3M8 7.500l2 3m0-3l-2 3M12 7.500l2 3m0-3l-2 3" stroke="#555" strokeWidth=".9" /></Svg>
            <span className="pt-px">搜标签</span>
          </button>
          <button className="ml-[4px] flex items-center gap-[3px] whitespace-nowrap">
            <Svg><path d="M14 14l5 5" stroke="#3e8ef0" strokeWidth="2.800" /><circle cx="9" cy="9" r="7.800" fill="#fff" stroke="#3e8ef0" strokeWidth="1.600" /><circle cx="9" cy="5" r="1.500" fill="#f5b21b" /><path d="M7 7h4v4.500h-1V15H8v-3.500H7z" fill="#f5b21b" /></Svg>
            <span className="pt-px">高级检索</span>
          </button>
        </div>
      </div>

      <div className="flex min-h-0 flex-1">
        <aside className="w-9 shrink-0 border-r border-[#b5b5b5] pt-[10px]">
          {sideTop.map(([l, i, m]) => <SideItem key={l} label={l} icon={i} menu={m} />)}
          <div className="h-[12px]" />
          {sideBottom.map(([l, i, m]) => <SideItem key={l} label={l} icon={i} menu={m} />)}
        </aside>

        <main className="flex min-w-0 flex-1 flex-col pl-px">
          <nav className="flex h-4 shrink-0 items-center border-b border-[#cfcfcf] pl-[6px]">
            <button className="flex items-center gap-[2px] border-r border-[#bbb] pr-[3px] text-[#9a9a9a]"><FaHome className="h-[10px] w-[11px] text-[#1b96e6]" />首页</button>
            <button className="flex w-[76px] items-center gap-[3px] whitespace-nowrap pl-[3px]"><TableIcon className="h-[7px] w-[8px]" head="#444" stroke="#444" />上市数据分析<span className="ml-auto mr-px"><Close /></span></button>
            <button className="ml-px flex h-full w-[97px] items-center gap-[3px] whitespace-nowrap bg-white pl-[3px] font-bold"><FaShareAlt className="h-[9px] w-[9px] text-[#1b96e6]" />上市数据分析-图 1<span className="ml-auto mr-[3px]"><Close /></span></button>
            <div className="ml-auto flex items-center gap-[5px] pr-[5px]">
              <button aria-label="向左"><svg viewBox="0 0 6 8" className="h-[6px] w-[5px]" fill="none" stroke="#333"><path d="M5 1v6L1 4z" /></svg></button>
              <button aria-label="向右"><svg viewBox="0 0 6 8" className="h-[6px] w-[5px]" fill="none" stroke="#333"><path d="M1 1v6l4-3z" /></svg></button>
              <button aria-label="列表"><svg viewBox="0 0 8 8" className="h-[6px] w-[6px]" fill="none" stroke="#333"><path d="M.5.500h7v7h-7zM.5 3h7M.5 5.200h7M4 .5v7" /></svg></button>
            </div>
          </nav>
          <div className="relative min-h-0 flex-1 overflow-hidden border-b border-[#d6d6d6] bg-white">
            <svg className="absolute inset-0 h-full w-full" fill="none">
              <g transform="translate(-37 -97)"><Graph /></g>
            </svg>
            <div className="absolute left-[7px] top-[7px] flex w-6 flex-col items-center bg-[#ececec] pb-[4px]">
              <button aria-label="适应窗口" className="flex h-[16px] w-full items-center justify-between px-[2px]">
                <svg viewBox="0 0 10 10" className="h-[9px] w-[9px]" stroke={BLUE} strokeWidth="1.300" fill="none"><path d="M.7 3V.7H3M.7.700l3 3M7 .7h2.300V3M9.300.700l-3 3M.7 7v2.300H3M.7 9.300l3-3M9.300 7v2.300H7M9.300 9.300l-3-3" /></svg>
                <Caret />
              </button>
              <input
                type="range"
                aria-label="缩放"
                defaultValue={50}
                className="h-[118px] w-[12px] cursor-pointer appearance-none bg-transparent [direction:rtl] [writing-mode:vertical-lr] [&::-webkit-slider-runnable-track]:ml-[2px] [&::-webkit-slider-runnable-track]:w-[7px] [&::-webkit-slider-runnable-track]:border [&::-webkit-slider-runnable-track]:border-[#adadad] [&::-webkit-slider-runnable-track]:bg-[#f3f3f3] [&::-webkit-slider-thumb]:ml-[-3px] [&::-webkit-slider-thumb]:h-[7px] [&::-webkit-slider-thumb]:w-[12px] [&::-webkit-slider-thumb]:appearance-none [&::-webkit-slider-thumb]:rounded-r-[4px] [&::-webkit-slider-thumb]:border [&::-webkit-slider-thumb]:border-[#6f7684] [&::-webkit-slider-thumb]:bg-white"
              />
            </div>
            <span className="pointer-events-none absolute left-[5px] top-[149px] h-[61px] w-[42px] border-2 border-[#e32222]" />
            <MiniMap />
            <MappingDialog />
          </div>
        </main>

        <div className="flex w-[4px] shrink-0 flex-col items-center border-l border-dotted border-[#a5a5a5] bg-[#f1f1f1]">
          <span className="mt-[2px] h-[8px] w-[3px] border-y-[3px] border-[#3c8fd2]" />
          <span className="my-auto h-5 w-[4px] border border-[#7fa8d4] bg-[#dbe8f5]" />
        </div>
        <RightPanel />
      </div>

      <footer className="flex h-[17px] shrink-0 items-center border-t border-[#cfcfcf] pl-[3px]">
        <span className="flex-1 pt-px">清林软件荣誉出品!</span>
        <span className="flex flex-[1.5] gap-[8px] whitespace-nowrap pl-[3px] pt-px"><span>实体数：2074</span><span>链接数：3638</span></span>
        <div className="relative flex h-full w-[380px] items-center justify-center border border-[#bcbcbc]">
          <span className="absolute inset-y-0 left-0 w-[44%] bg-[#e8e8ac]" />
          <span className="relative pr-2 pt-px">1623兆中742兆</span>
          <button aria-label="清理" className="absolute right-[2px]"><FaTrashAlt className="h-[8px] w-[8px]" /></button>
        </div>
      </footer>
    </div>
  );
}
